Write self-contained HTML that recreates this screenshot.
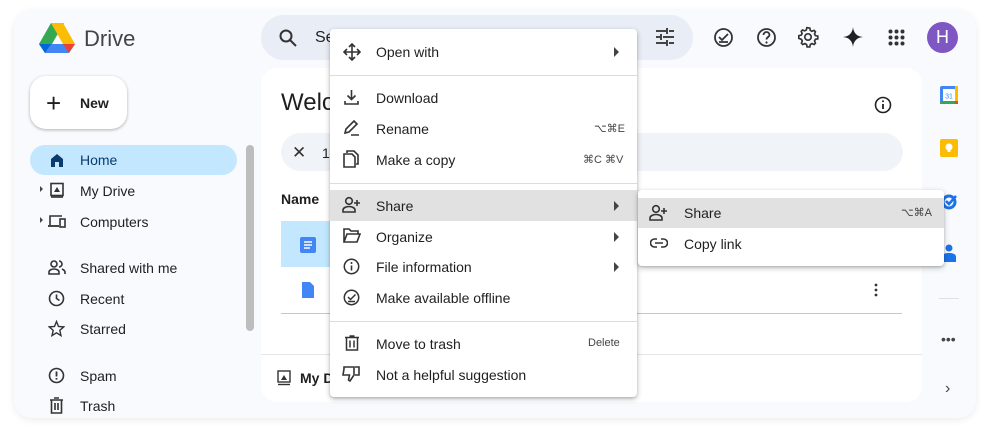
<!DOCTYPE html><html><head><style>
*{margin:0;padding:0;box-sizing:border-box}
body{width:990px;height:436px;background:#fff;font-family:"Liberation Sans",Arial,sans-serif;color:#1f1f1f;position:relative;overflow:hidden}
.win{position:absolute;left:14px;top:10px;width:962px;height:408px;background:#f8fafd;border-radius:18px;box-shadow:0 2px 8px rgba(0,0,0,.08)}
.a{position:absolute}
.t{position:absolute;font-size:14px;color:#1f1f1f;white-space:nowrap}
svg{position:absolute}
.menu{position:absolute;background:#fff;border-radius:4px;box-shadow:0 2px 6px rgba(0,0,0,.25),0 1px 2px rgba(0,0,0,.15)}
.hl{position:absolute;background:#e1e1e1}
.sc{position:absolute;font-size:11px;color:#444;white-space:nowrap}
.dv{position:absolute;height:1px;background:#dadce0}
.tri{position:absolute;width:0;height:0;border-left:5px solid #444;border-top:5px solid transparent;border-bottom:5px solid transparent}
</style></head><body>
<div class="win"></div>
<!-- logo -->
<svg style="left:38px;top:22px" width="38" height="32" viewBox="0 0 38 32"><path d="M12 1h13L13 22H0z" fill="#34a853" transform="translate(1,0)"/><path d="M13 1h12l12 21H25z" fill="#fbbc04"/><path d="M1 22h36l-6 9H7z" fill="#4285f4"/><path d="M31 31l6-9H25z" fill="#ea4335"/><path d="M1 22l6 9 6-9z" fill="#0066da"/></svg>
<div class="t" style="left:84px;top:26px;font-size:22px;color:#444">Drive</div>
<!-- new -->
<div class="a" style="left:30px;top:76px;width:97px;height:53px;background:#fff;border-radius:16px;box-shadow:0 1px 3px rgba(0,0,0,.3)"></div>
<div class="t" style="left:46px;top:88px;font-size:26px;font-weight:300">+</div>
<div class="t" style="left:80px;top:95px;font-weight:bold;font-size:14px">New</div>
<!-- nav -->
<div class="a" style="left:30px;top:145px;width:207px;height:30px;background:#c2e7ff;border-radius:15px"></div>
<svg style="left:49px;top:152px" width="16" height="16" viewBox="0 0 16 16"><path d="M2 7l6-5 6 5v8h-4v-5H6v5H2z" fill="#0b3b6e"/></svg>
<div class="t" style="left:80px;top:152px;color:#0b3b6e">Home</div>
<div class="tri" style="left:40px;top:186px;border-left-width:3px;border-top-width:3px;border-bottom-width:3px"></div>
<svg style="left:49px;top:182px" width="16" height="16" viewBox="0 0 16 16"><rect x="2" y="1.5" width="12" height="12" fill="none" stroke="#333" stroke-width="1.6"/><path d="M2 15h12" stroke="#333" stroke-width="1.6"/><path d="M5 10l3-5 3 5z" fill="#333"/></svg>
<div class="t" style="left:80px;top:183px">My Drive</div>
<div class="tri" style="left:40px;top:217px;border-left-width:3px;border-top-width:3px;border-bottom-width:3px"></div>
<svg style="left:47px;top:213px" width="20" height="16" viewBox="0 0 20 16"><path d="M3 12V3h12" fill="none" stroke="#333" stroke-width="1.6"/><path d="M1 13h11" stroke="#333" stroke-width="1.8"/><rect x="13" y="6" width="5" height="8" fill="none" stroke="#333" stroke-width="1.6"/></svg>
<div class="t" style="left:80px;top:214px">Computers</div>
<svg style="left:48px;top:259px" width="18" height="16" viewBox="0 0 18 16"><circle cx="6" cy="5" r="3" fill="none" stroke="#333" stroke-width="1.6"/><path d="M1 15v-2c0-2 3-3 5-3s5 1 5 3v2z" fill="none" stroke="#333" stroke-width="1.6"/><path d="M11 2a3 3 0 010 6M14 10c2 1 3 2 3 3v2" fill="none" stroke="#333" stroke-width="1.6"/></svg>
<div class="t" style="left:80px;top:260px">Shared with me</div>
<svg style="left:48px;top:290px" width="17" height="17" viewBox="0 0 17 17"><circle cx="8.5" cy="8.5" r="7" fill="none" stroke="#333" stroke-width="1.6"/><path d="M8.5 4.5v4l3 2" fill="none" stroke="#333" stroke-width="1.6"/></svg>
<div class="t" style="left:80px;top:291px">Recent</div>
<svg style="left:48px;top:320px" width="17" height="17" viewBox="0 0 17 17"><path d="M8.5 1.5l2 5 5.3.4-4 3.5 1.2 5.2-4.5-2.8-4.5 2.8 1.2-5.2-4-3.5 5.3-.4z" fill="none" stroke="#333" stroke-width="1.4"/></svg>
<div class="t" style="left:80px;top:321px">Starred</div>
<svg style="left:48px;top:367px" width="17" height="17" viewBox="0 0 17 17"><circle cx="8.5" cy="8.5" r="7" fill="none" stroke="#333" stroke-width="1.6"/><path d="M8.5 4.5v5M8.5 11v1.6" stroke="#333" stroke-width="1.8"/></svg>
<div class="t" style="left:80px;top:368px">Spam</div>
<svg style="left:49px;top:397px" width="15" height="17" viewBox="0 0 15 17"><path d="M1 3h13M5 1h5M2.5 3v13h10V3M6 6v7M9 6v7" fill="none" stroke="#333" stroke-width="1.6"/></svg>
<div class="t" style="left:80px;top:398px">Trash</div>
<div class="a" style="left:246px;top:145px;width:8px;height:186px;background:#bdbdbd;border-radius:4px"></div>
<!-- search -->
<div class="a" style="left:261px;top:15px;width:432px;height:45px;background:#e9eef6;border-radius:23px"></div>
<svg style="left:278px;top:28px" width="20" height="20" viewBox="0 0 20 20"><circle cx="8" cy="8" r="5.5" fill="none" stroke="#333" stroke-width="2"/><path d="M12 12l6 6" stroke="#333" stroke-width="2"/></svg>
<div class="t" style="left:315px;top:29px;font-size:16px">Se</div>
<svg style="left:655px;top:28px" width="20" height="18" viewBox="0 0 20 18"><path d="M1 3h10M14 3h5M1 9h4M8 9h11M1 15h10M14 15h5M12 0v6M6 6v6M12 12v6" stroke="#444" stroke-width="2"/></svg>
<svg style="left:713px;top:27px" width="21" height="21" viewBox="0 0 21 21"><circle cx="10.5" cy="10.5" r="8.5" fill="none" stroke="#333" stroke-width="1.8"/><path d="M6 10l3 3 6-6M6 15h9" fill="none" stroke="#333" stroke-width="1.8"/></svg>
<svg style="left:756px;top:27px" width="21" height="21" viewBox="0 0 21 21"><circle cx="10.5" cy="10.5" r="8.5" fill="none" stroke="#333" stroke-width="1.8"/><path d="M7.5 8a3 3 0 116 0c0 2-3 2-3 4.5" fill="none" stroke="#333" stroke-width="1.8"/><circle cx="10.5" cy="15.5" r="1.1" fill="#333"/></svg>
<svg style="left:797px;top:26px" width="22" height="22" viewBox="0 0 24 24"><path d="M12 2l2 .3.5 2.5 1.8 1 2.4-1 1.4 1.5-1 2.4 1 1.8 2.6.5v3l-2.6.5-1 1.8 1 2.4-1.4 1.5-2.4-1-1.8 1-.5 2.6h-3l-.5-2.6-1.8-1-2.4 1-1.5-1.5 1-2.4-1-1.8L2 13.5v-3l2.6-.5 1-1.8-1-2.4L6 4.3l2.4 1 1.8-1 .5-2.5z" fill="none" stroke="#333" stroke-width="1.8"/><circle cx="12" cy="12" r="3.5" fill="none" stroke="#333" stroke-width="1.8"/></svg>
<svg style="left:843px;top:27px" width="20" height="20" viewBox="0 0 20 20"><path d="M10 0C10.5 6 14 9.5 20 10 14 10.5 10.5 14 10 20 9.5 14 6 10.5 0 10 6 9.5 9.5 6 10 0z" fill="#222"/></svg>
<svg style="left:888px;top:29px" width="17" height="17" viewBox="0 0 17 17" fill="#333"><circle cx="2.5" cy="2.5" r="2"/><circle cx="8.5" cy="2.5" r="2"/><circle cx="14.5" cy="2.5" r="2"/><circle cx="2.5" cy="8.5" r="2"/><circle cx="8.5" cy="8.5" r="2"/><circle cx="14.5" cy="8.5" r="2"/><circle cx="2.5" cy="14.5" r="2"/><circle cx="8.5" cy="14.5" r="2"/><circle cx="14.5" cy="14.5" r="2"/></svg>
<div class="a" style="left:927px;top:22px;width:31px;height:31px;border-radius:50%;background:#7e57c2;color:#fff;font-size:18px;text-align:center;line-height:31px">H</div>
<!-- main card -->
<div class="a" style="left:261px;top:68px;width:661px;height:334px;background:#fff;border-radius:16px"></div>
<div class="t" style="left:281px;top:89px;font-size:24px">Welc</div>
<svg style="left:874px;top:96px" width="18" height="18" viewBox="0 0 18 18"><circle cx="9" cy="9" r="7.5" fill="none" stroke="#222" stroke-width="1.6"/><path d="M9 8v5" stroke="#222" stroke-width="1.8"/><circle cx="9" cy="5.3" r="1" fill="#222"/></svg>
<div class="a" style="left:281px;top:133px;width:622px;height:38px;background:#f0f4f9;border-radius:19px"></div>
<div class="t" style="left:292px;top:143px;font-size:17px;color:#333">✕</div>
<div class="t" style="left:322px;top:145px">1</div>
<div class="t" style="left:281px;top:191px;font-weight:bold;font-size:14px">Name</div>
<div class="a" style="left:281px;top:221px;width:60px;height:46px;background:#c2e7ff"></div>
<svg style="left:300px;top:237px" width="16" height="16" viewBox="0 0 16 16"><rect width="16" height="16" rx="2" fill="#4285f4"/><path d="M4 5h8M4 8h8M4 11h6" stroke="#fff" stroke-width="1.4"/></svg>
<svg style="left:302px;top:282px" width="12" height="16" viewBox="0 0 12 16"><path d="M0 0h8l4 4v12H0z" fill="#4285f4"/></svg>
<div class="a" style="left:281px;top:313px;width:621px;height:1px;background:#c7c7c7"></div>
<svg style="left:874px;top:283px" width="4" height="14" viewBox="0 0 4 14" fill="#333"><circle cx="2" cy="2" r="1.4"/><circle cx="2" cy="7" r="1.4"/><circle cx="2" cy="12" r="1.4"/></svg>
<div class="a" style="left:261px;top:354px;width:661px;height:1px;background:#e6e6e6"></div>
<svg style="left:277px;top:370px" width="14" height="16" viewBox="0 0 14 16"><rect x="1" y="1" width="12" height="11" fill="none" stroke="#333" stroke-width="1.4"/><path d="M1 14.5h12" stroke="#333" stroke-width="1.4"/><path d="M4 10l3-5 3 5z" fill="#333"/></svg>
<div class="t" style="left:300px;top:370px;font-weight:bold">My D</div>
<!-- right panel -->
<svg style="left:940px;top:86px" width="18" height="18" viewBox="0 0 18 18"><rect width="18" height="18" rx="2" fill="#4285f4"/><rect x="3" y="3" width="12" height="12" fill="#fff"/><path d="M0 15h18v3H0z" fill="#34a853"/><path d="M15 0h3v15h-3z" fill="#fbbc04"/><path d="M15 15h3v3h-3z" fill="#ea4335"/><text x="9" y="12.5" font-size="7" text-anchor="middle" fill="#4285f4" font-family="Liberation Sans">31</text></svg>
<svg style="left:940px;top:139px" width="18" height="18" viewBox="0 0 18 18"><rect width="18" height="18" rx="2" fill="#fbbc04"/><circle cx="9" cy="8" r="3.5" fill="#fff"/><rect x="7.5" y="11" width="3" height="2" fill="#fff"/></svg>
<svg style="left:940px;top:192px" width="18" height="18" viewBox="0 0 18 18"><circle cx="9" cy="10" r="6" fill="none" stroke="#1a73e8" stroke-width="3"/><path d="M6 9l3 3 7-8" fill="none" stroke="#1a73e8" stroke-width="2.5"/></svg>
<svg style="left:942px;top:244px" width="14" height="20" viewBox="0 0 14 20"><circle cx="7" cy="4" r="3.5" fill="#1a73e8"/><path d="M0 18v-5c0-3 3-4 7-4s7 1 7 4v5z" fill="#1a73e8"/></svg>
<div class="a" style="left:939px;top:298px;width:20px;height:1px;background:#e0e0e0"></div>
<div class="t" style="left:941px;top:331px;font-size:14px;color:#444;letter-spacing:0">•••</div>
<div class="t" style="left:945px;top:380px;font-size:16px;color:#444">›</div>
<!-- context menu -->
<div class="menu" style="left:330px;top:29px;width:307px;height:368px"></div>
<div class="dv" style="left:330px;top:75px;width:307px"></div>
<div class="dv" style="left:330px;top:183px;width:307px"></div>
<div class="dv" style="left:330px;top:321px;width:307px"></div>
<div class="hl" style="left:330px;top:190px;width:307px;height:31px"></div>
<svg style="left:343px;top:43px" width="18" height="18" viewBox="0 0 18 18"><path d="M9 1v16M1 9h16M6 4l3-3 3 3M6 14l3 3 3-3M4 6L1 9l3 3M14 6l3 3-3 3" fill="none" stroke="#333" stroke-width="1.6"/></svg>
<div class="t" style="left:376px;top:44px">Open with</div><div class="tri" style="left:614px;top:47px"></div>
<svg style="left:344px;top:89px" width="15" height="16" viewBox="0 0 15 16"><path d="M7.5 1v9M3.5 6.5l4 4 4-4M1 12v3h13v-3" fill="none" stroke="#333" stroke-width="1.6"/></svg>
<div class="t" style="left:376px;top:90px">Download</div>
<svg style="left:343px;top:120px" width="17" height="16" viewBox="0 0 17 16"><path d="M2 13l1-4 8-8 3 3-8 8z M8 15h8" fill="none" stroke="#333" stroke-width="1.6"/></svg>
<div class="t" style="left:376px;top:121px">Rename</div><div class="sc" style="left:594px;top:122px">⌥⌘E</div>
<svg style="left:343px;top:150px" width="17" height="18" viewBox="0 0 17 18"><path d="M4 3V1h7l4 4v9h-2M1 4h8l3 3v10H1z" fill="none" stroke="#333" stroke-width="1.6"/></svg>
<div class="t" style="left:376px;top:152px">Make a copy</div><div class="sc" style="left:583px;top:153px">⌘C ⌘V</div>
<svg style="left:342px;top:196px" width="19" height="17" viewBox="0 0 19 17"><circle cx="7" cy="5" r="3.3" fill="none" stroke="#333" stroke-width="1.6"/><path d="M1 16v-2c0-2 3-3.5 6-3.5s6 1.5 6 3.5v2z M15 4v6M12 7h6" fill="none" stroke="#333" stroke-width="1.6"/></svg>
<div class="t" style="left:376px;top:198px">Share</div><div class="tri" style="left:614px;top:201px"></div>
<svg style="left:343px;top:228px" width="18" height="15" viewBox="0 0 18 15"><path d="M1 14V1h5l2 2h7v3M1 14l3-8h13l-3 8z" fill="none" stroke="#333" stroke-width="1.6"/></svg>
<div class="t" style="left:376px;top:229px">Organize</div><div class="tri" style="left:614px;top:232px"></div>
<svg style="left:343px;top:258px" width="17" height="17" viewBox="0 0 17 17"><circle cx="8.5" cy="8.5" r="7.2" fill="none" stroke="#333" stroke-width="1.5"/><path d="M8.5 7.5v5" stroke="#333" stroke-width="1.6"/><circle cx="8.5" cy="5" r="1" fill="#333"/></svg>
<div class="t" style="left:376px;top:259px">File information</div><div class="tri" style="left:614px;top:262px"></div>
<svg style="left:343px;top:289px" width="17" height="17" viewBox="0 0 17 17"><circle cx="8.5" cy="8.5" r="7.2" fill="none" stroke="#333" stroke-width="1.5"/><path d="M5 8l2.5 2.5 5-5M5 12.5h7" fill="none" stroke="#333" stroke-width="1.5"/></svg>
<div class="t" style="left:376px;top:290px">Make available offline</div>
<svg style="left:345px;top:335px" width="14" height="16" viewBox="0 0 14 16"><path d="M0 2.5h14M4.5 1h5M1.5 2.5v12.5h11V2.5M5 5.5v7M9 5.5v7" fill="none" stroke="#333" stroke-width="1.5"/></svg>
<div class="t" style="left:376px;top:336px">Move to trash</div><div class="sc" style="left:588px;top:337px">Delete</div>
<svg style="left:342px;top:365px" width="18" height="17" viewBox="0 0 18 17"><path d="M2 2h10v8l-4 6-1.5-1 1-5H1l1-6zM13 2h4v8h-4" fill="none" stroke="#333" stroke-width="1.6"/></svg>
<div class="t" style="left:376px;top:367px">Not a helpful suggestion</div>
<!-- submenu -->
<div class="menu" style="left:638px;top:190px;width:306px;height:76px"></div>
<div class="hl" style="left:638px;top:198px;width:306px;height:30px"></div>
<svg style="left:649px;top:204px" width="19" height="17" viewBox="0 0 19 17"><circle cx="7" cy="5" r="3.3" fill="none" stroke="#333" stroke-width="1.6"/><path d="M1 16v-2c0-2 3-3.5 6-3.5s6 1.5 6 3.5v2z M15 4v6M12 7h6" fill="none" stroke="#333" stroke-width="1.6"/></svg>
<div class="t" style="left:684px;top:205px">Share</div><div class="sc" style="left:901px;top:206px">⌥⌘A</div>
<svg style="left:650px;top:238px" width="18" height="10" viewBox="0 0 18 10"><path d="M7 1H4.5a4 4 0 000 8H7M11 1h2.5a4 4 0 010 8H11M5 5h8" fill="none" stroke="#333" stroke-width="1.6"/></svg>
<div class="t" style="left:684px;top:236px">Copy link</div>
</body></html>
